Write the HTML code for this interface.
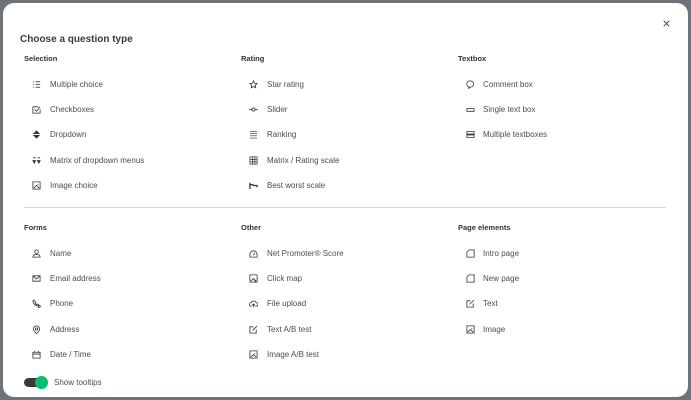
<!DOCTYPE html>
<html><head><meta charset="utf-8"><style>
*{margin:0;padding:0;box-sizing:border-box}
body{width:691px;height:400px;background:#6d7378;position:relative;overflow:hidden;font-family:"Liberation Sans",sans-serif}
.m{position:absolute;left:3px;top:3px;width:685px;height:394px;background:#fff;border-radius:11px}
.t{position:absolute;font-size:8px;line-height:10px;color:#4a4d50;white-space:nowrap}
.h{position:absolute;font-size:7.5px;line-height:10px;color:#333;font-weight:bold;white-space:nowrap}
svg{position:absolute;width:9px;height:9px;fill:none;stroke:#333;stroke-width:0.9}
</style></head><body>
<div class="m"></div>
<div style="position:absolute;left:20px;top:34px;font-size:10px;font-weight:bold;color:#3a3c3e">Choose a question type</div>
<svg style="left:663px;top:20px;width:7px;height:7px" viewBox="0 0 10 10"><path d="M1 1L9 9M9 1L1 9" stroke-width="1.2"/></svg>

<div class="h" style="left:24px;top:54px">Selection</div>
<div class="h" style="left:241px;top:54px">Rating</div>
<div class="h" style="left:458px;top:54px">Textbox</div>

<svg style="left:32px;top:80px" viewBox="0 0 10 10"><path d="M1 2h1M1 5h1M1 8h1M4 2h5M4 5h5M4 8h5"/></svg>
<div class="t" style="left:50px;top:80px">Multiple choice</div>
<svg style="left:32px;top:105px" viewBox="0 0 10 10"><path d="M1 2h6M1 2v7h8V5M3 5l2 2 4-5"/></svg>
<div class="t" style="left:50px;top:105px">Checkboxes</div>
<svg style="left:32px;top:130px" viewBox="0 0 10 10"><path d="M2 4h6L5 1zM2 6h6L5 9z" style="fill:#333"/></svg>
<div class="t" style="left:50px;top:130px">Dropdown</div>
<svg style="left:32px;top:156px" viewBox="0 0 10 10"><path d="M1 2h3M6 2h3M1 5h3L2.5 8zM6 5h3L7.5 8z" style="fill:#333"/></svg>
<div class="t" style="left:50px;top:156px">Matrix of dropdown menus</div>
<svg style="left:32px;top:181px" viewBox="0 0 10 10"><path d="M1 1h8v8H1zM2 8l3-3 3 3M6 4h1"/></svg>
<div class="t" style="left:50px;top:181px">Image choice</div>

<svg style="left:249px;top:80px" viewBox="0 0 10 10"><path d="M5 1l1.2 2.6 2.8.3-2.1 1.9.6 2.8L5 7.2 2.5 8.6l.6-2.8L1 3.9l2.8-.3z"/></svg>
<div class="t" style="left:267px;top:80px">Star rating</div>
<svg style="left:249px;top:105px" viewBox="0 0 10 10"><path d="M0 5h3M7 5h3"/><circle cx="5" cy="5" r="1.8"/></svg>
<div class="t" style="left:267px;top:105px">Slider</div>
<svg style="left:249px;top:130px" viewBox="0 0 10 10"><path d="M1 1.5h8M1 4h8M1 6.5h8M1 9h8" stroke-width="0.7"/></svg>
<div class="t" style="left:267px;top:130px">Ranking</div>
<svg style="left:249px;top:156px" viewBox="0 0 10 10"><path d="M1 1h8v8H1zM1 4h8M1 6.5h8M4 1v8M6.5 1v8" stroke-width="0.8"/></svg>
<div class="t" style="left:267px;top:156px">Matrix / Rating scale</div>
<svg style="left:249px;top:181px" viewBox="0 0 10 10"><path d="M1 2v7M1 4h3l1 1h4v2" stroke-width="1.4"/></svg>
<div class="t" style="left:267px;top:181px">Best worst scale</div>

<svg style="left:466px;top:80px" viewBox="0 0 10 10"><path d="M5 1a4 3.5 0 1 1-1 7L3 9.5V7.6A4 3.5 0 0 1 5 1z"/></svg>
<div class="t" style="left:483px;top:80px">Comment box</div>
<svg style="left:466px;top:105px" viewBox="0 0 10 10"><path d="M1 4h8v3H1z"/></svg>
<div class="t" style="left:483px;top:105px">Single text box</div>
<svg style="left:466px;top:130px" viewBox="0 0 10 10"><path d="M1 1.5h8v3H1zM1 5.5h8v3H1z"/></svg>
<div class="t" style="left:483px;top:130px">Multiple textboxes</div>

<div style="position:absolute;left:24px;top:207px;width:642px;height:1px;background:#d8d9db"></div>

<div class="h" style="left:24px;top:223px">Forms</div>
<div class="h" style="left:241px;top:223px">Other</div>
<div class="h" style="left:458px;top:223px">Page elements</div>

<svg style="left:32px;top:249px" viewBox="0 0 10 10"><circle cx="5" cy="3" r="2"/><path d="M1 9c0-2 1.5-3 4-3s4 1 4 3zM3 9h4"/></svg>
<div class="t" style="left:50px;top:249px">Name</div>
<svg style="left:32px;top:274px" viewBox="0 0 10 10"><path d="M1 2h8v6H1zM1 2l4 3.5L9 2"/></svg>
<div class="t" style="left:50px;top:274px">Email address</div>
<svg style="left:32px;top:299px" viewBox="0 0 10 10"><path d="M2 1L1 2c0 3 3 6 6 6l1-1-2-1.5L5 6.5 3.5 5 4.5 4z"/><circle cx="8" cy="8.2" r="1.2"/></svg>
<div class="t" style="left:50px;top:299px">Phone</div>
<svg style="left:32px;top:325px" viewBox="0 0 10 10"><path d="M5 9.5C2 7 1.5 5.5 1.5 4.5a3.5 3.5 0 0 1 7 0C8.5 5.5 8 7 5 9.5z"/><circle cx="5" cy="4.5" r="1.3"/></svg>
<div class="t" style="left:50px;top:325px">Address</div>
<svg style="left:32px;top:350px" viewBox="0 0 10 10"><path d="M1 2.5h8V9H1zM1 4.5h8M3 1v2M7 1v2"/></svg>
<div class="t" style="left:50px;top:350px">Date / Time</div>

<svg style="left:249px;top:249px" viewBox="0 0 10 10"><path d="M1 9V6a4 4 0 0 1 8 0v3zM5 7l1.5-3"/></svg>
<div class="t" style="left:267px;top:249px">Net Promoter® Score</div>
<svg style="left:249px;top:274px" viewBox="0 0 10 10"><path d="M1 1h8v8H1zM2 8l3-3 3 3M6 7l2 2"/></svg>
<div class="t" style="left:267px;top:274px">Click map</div>
<svg style="left:249px;top:299px" viewBox="0 0 10 10"><path d="M3 8H2.5a2 2 0 0 1 0-4 3 3 0 0 1 5.5 0 2 2 0 0 1 0 4H7M5 9V5.5M3.5 7L5 5.5 6.5 7"/></svg>
<div class="t" style="left:267px;top:299px">File upload</div>
<svg style="left:249px;top:325px" viewBox="0 0 10 10"><path d="M5 2H1v7h7V5M4 6l5-5"/></svg>
<div class="t" style="left:267px;top:325px">Text A/B test</div>
<svg style="left:249px;top:350px" viewBox="0 0 10 10"><path d="M1 1h8v8H1zM2 8l3-3 3 3M6 4h1"/></svg>
<div class="t" style="left:267px;top:350px">Image A/B test</div>

<svg style="left:466px;top:249px" viewBox="0 0 10 10"><path d="M3.5 1H9v8H1V3.5z"/></svg>
<div class="t" style="left:483px;top:249px">Intro page</div>
<svg style="left:466px;top:274px" viewBox="0 0 10 10"><path d="M3.5 1H9v8H1V3.5z"/></svg>
<div class="t" style="left:483px;top:274px">New page</div>
<svg style="left:466px;top:299px" viewBox="0 0 10 10"><path d="M5 2H1v7h7V5M4 6l5-5"/></svg>
<div class="t" style="left:483px;top:299px">Text</div>
<svg style="left:466px;top:325px" viewBox="0 0 10 10"><path d="M1 1h8v8H1zM2 8l3-3 3 3M6 4h1"/></svg>
<div class="t" style="left:483px;top:325px">Image</div>

<div style="position:absolute;left:24px;top:378px;width:22px;height:9px;border-radius:5px;background:#333a40"></div>
<div style="position:absolute;left:35px;top:376px;width:13px;height:13px;border-radius:50%;background:#00bf6f"></div>
<div class="t" style="left:54px;top:378px">Show tooltips</div>
</body></html>
